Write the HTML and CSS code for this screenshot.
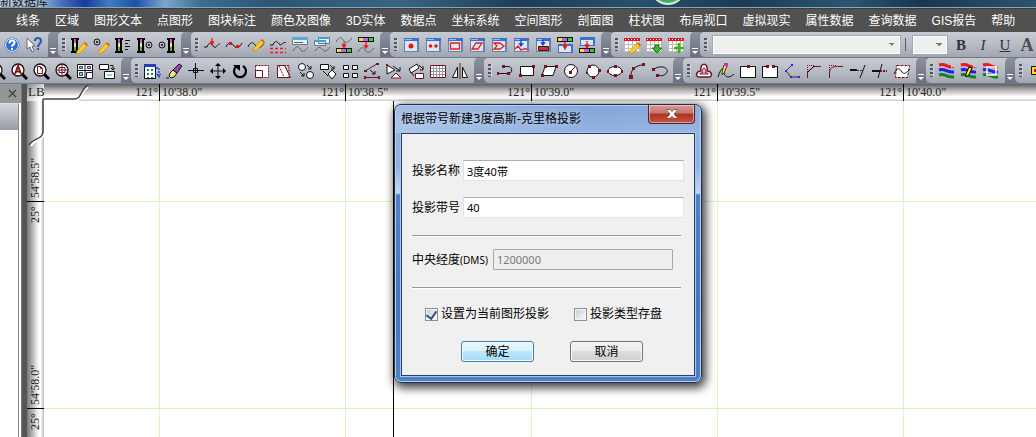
FILE: index.html
```html
<!DOCTYPE html>
<html lang="zh-CN">
<head>
<meta charset="utf-8">
<title>新数据库</title>
<link rel="stylesheet" href="styles.css">
</head>
<body>
<div class="app">
  <header class="titlebar"><span class="titlebar-text">新数据库</span><span class="orb"></span></header>

  <nav class="menu">
    <button>线条</button><button>区域</button><button>图形文本</button><button>点图形</button><button>图块标注</button><button>颜色及图像</button><button>3D实体</button><button>数据点</button><button>坐标系统</button><button>空间图形</button><button>剖面图</button><button>柱状图</button><button>布局视口</button><button>虚拟现实</button><button>属性数据</button><button>查询数据</button><button>GIS报告</button><button>帮助</button>
  </nav>

  <svg class="defs" aria-hidden="true">
    <symbol id="bar" viewBox="0 0 18 18"><path fill="#000" d="M1 2h8v2H8v11h1v2H1v-2h1V4H1z"/><path fill="#e040e0" d="M4 3h2v4H4z"/><path fill="#f4f060" d="M4 7h2v4H4z"/><path fill="#40b030" d="M4 11h2v4H4z"/></symbol>
    <symbol id="pencil" viewBox="0 0 18 18"><path fill="#ffc928" stroke="#c08000" stroke-width=".6" d="M7 15l7-8 3 3-7 7-4 1z"/><path fill="#e05030" d="M14 7l1-1 3 3-1 1z"/></symbol>
    <symbol id="win" viewBox="0 0 18 18"><path fill="#5f82b8" d="M2 2h15v14H2z"/><path fill="#3c70d0" d="M2 2h15v3H2z"/><path fill="#dce8f0" d="M3 5h12v10H3z"/><path fill="#8fc0f8" d="M3 3h7v1H3z"/></symbol>
    <symbol id="lens" viewBox="0 0 18 18"><path stroke="#000" stroke-width="3" d="M12 12l5 5"/><circle cx="8" cy="8" r="6" fill="#fff" stroke="#111" stroke-width="1.300"/></symbol>
    <symbol id="table" viewBox="0 0 18 18"><path fill="#fff" stroke="#bbb" d="M1.500 3.500h15v12h-15zM5.500 5v10M9.500 5v10M13.500 5v10M2 8.500h14M2 12.500h14"/><path fill="#e01818" d="M1 2h16v3H1z"/><path stroke="#fff" stroke-dasharray="1 2" d="M2 3.500h14"/></symbol>
    <symbol id="strip" viewBox="0 0 18 5"><path fill="#111" d="M1 0h16v5H1z"/><path fill="#f8e020" d="M2 1h4v3H2z"/><path fill="#c060f0" d="M6 1h5v3H6z"/><path fill="#30d040" d="M12 1h4v3h-4z"/></symbol>
    <symbol id="waves" viewBox="0 0 18 18"><g fill="none" stroke-width="3"><path stroke="#f01818" d="M1 3c6-2 8 2 12 2"/><path stroke="#2020f0" d="M1 8c6-2 8 3 15 2"/><path stroke="#108020" d="M1 13c6-2 8 3 15 2"/></g><path fill="none" stroke="#f01818" stroke-dasharray="2 1" d="M11 4c2 1 4 2 6 2"/></symbol>
  </svg>

  <div class="toolrow">
    <div class="group first">
      <button class="tool" aria-label="帮助主题"><svg viewBox="0 0 18 18"><circle cx="9" cy="9" r="6.500" fill="#2d6fd0" stroke="#fff"/><circle cx="9" cy="9" r="7.300" fill="none" stroke="#4a80c8" stroke-width=".8"/><path class="w2" d="M6.500 7.500c0-4 5-3.500 5-.8 0 2-2.500 1.800-2.500 4M9 12v2"/></svg></button>
      <button class="tool" aria-label="这是什么"><svg viewBox="0 0 18 18"><path fill="#fff" stroke="#667" d="M2 2l8 8H7l2 5-2 1-2-5-3 2z"/><path fill="none" stroke="#2860b0" stroke-width="2.200" d="M10 5c0-4 6-4 6 0 0 3-3 2.500-3 6M13 12v2"/></svg></button>
      <span class="more"></span>
    </div>
    <div class="group">
      <button class="tool" aria-label="编辑图例"><svg viewBox="0 0 18 18"><use href="#bar"/><use href="#pencil"/></svg></button>
      <button class="tool" aria-label="编辑点"><svg viewBox="0 0 18 18"><circle class="k" cx="5" cy="6" r="3"/><circle cx="5" cy="6" r="1"/><use href="#pencil"/></svg></button>
      <button class="tool" aria-label="图例列表"><svg viewBox="0 0 18 18"><use href="#bar"/><path class="k" d="M11 4.500h5M11 7.500h3M11 10.500h5M11 13.500h3"/></svg></button>
      <button class="tool" aria-label="图例到点"><svg viewBox="0 0 18 18"><use href="#bar"/><circle class="k" cx="13" cy="9" r="3"/><circle cx="13" cy="9" r="1"/></svg></button>
      <button class="tool" aria-label="点到图例"><svg viewBox="0 0 18 18"><use href="#bar" x="8"/><circle class="k" cx="4" cy="9" r="3"/><circle cx="4" cy="9" r="1"/></svg></button>
      <span class="more"></span>
    </div>
    <div class="group">
      <button class="tool" aria-label="线上加点"><svg viewBox="0 0 18 18"><path class="k" d="M1 11h3c2-6 5-3 7 0 2 2 4-4 6-3"/><path class="red" d="M9 2v5M7.500 6h3L9 9z"/></svg></button>
      <button class="tool" aria-label="线移点"><svg viewBox="0 0 18 18"><path class="k" d="M1 11c3-7 6-4 8-1s5 2 8-3"/><path class="rf" d="M4 6h3v3H4zM11 9h3v3h-3z"/></svg></button>
      <button class="tool" aria-label="编辑线"><svg viewBox="0 0 18 18"><path class="k" d="M1 11c3-7 6-4 8-1s5 2 8-3"/><use href="#pencil" y="-3"/></svg></button>
      <button class="tool" aria-label="线型"><svg viewBox="0 0 18 18"><path class="k" d="M1 9h3c2-6 5-3 7 0 2 0 4-4 6-2"/><path class="red" stroke-dasharray="3 2" d="M1 12.500h16M1 16.500h16"/></svg></button>
      <button class="tool" aria-label="线属性"><svg viewBox="0 0 18 18"><path fill="#e8f2f6" stroke="#678" d="M1.500 1.500h15v7h-15z"/><path fill="#58a8d8" d="M1 1h16v3H1z"/><path class="g" d="M3 6.500h9M2 15c4-7 6-4 8-1s4 1 7-3"/></svg></button>
      <button class="tool" aria-label="线窗口"><svg viewBox="0 0 18 18"><path fill="#e8f2f6" stroke="#678" d="M5.500 1.500h11v6h-11zM1.500 4.500h11v5h-11z"/><path fill="#40a0d0" d="M5 1h12v2H5zM1 4h12v2H1z"/><path class="g" d="M2 15c4-6 6-3 8-1s4 1 7-3"/></svg></button>
      <button class="tool" aria-label="线到色带"><svg viewBox="0 0 18 18"><path class="g" d="M1 6c4-7 6-4 8-1s4 1 8-3"/><use href="#strip" y="12" width="18" height="5"/><path class="red" d="M9 6v5M7.500 9h3L9 11.500z"/></svg></button>
      <button class="tool" aria-label="色带到线"><svg viewBox="0 0 18 18"><use href="#strip" y="1" width="18" height="5"/><path class="red" d="M9 6v5M7.500 10h3L9 12z"/><path class="g" d="M1 16c4-7 6-4 8-1s4 1 8-3"/></svg></button>
      <span class="more"></span>
    </div>
    <div class="group">
      <button class="tool" aria-label="单点"><svg viewBox="0 0 18 18"><use href="#win"/><circle class="rf" cx="9" cy="10" r="2.500"/></svg></button>
      <button class="tool" aria-label="双点"><svg viewBox="0 0 18 18"><use href="#win"/><circle class="rf" cx="6.500" cy="10" r="1.800"/><circle class="rf" cx="12" cy="10" r="1.800"/></svg></button>
      <button class="tool" aria-label="矩形窗口"><svg viewBox="0 0 18 18"><use href="#win"/><path class="red" d="M4.500 7h9v6h-9z"/></svg></button>
      <button class="tool" aria-label="斜形窗口"><svg viewBox="0 0 18 18"><use href="#win"/><path class="red" d="M8 7h6l-4 6H4z"/></svg></button>
      <button class="tool" aria-label="多边形窗口"><svg viewBox="0 0 18 18"><use href="#win"/><path class="red" d="M4 7h6l4 3-4 3H4l3-3z"/></svg></button>
      <button class="tool" aria-label="导入折线"><svg viewBox="0 0 18 18"><use href="#win"/><path class="blue" d="M9 3v6M7.500 8h3L9 10z"/><path class="red" d="M3 13l3-3 3 4 3-1h3"/></svg></button>
      <button class="tool" aria-label="导入区"><svg viewBox="0 0 18 18"><use href="#win"/><path fill="#f02020" stroke="#222" d="M4.500 10.500h10v4h-10z"/><path class="blue" d="M9 3v5M7.500 7h3L9 9z"/></svg></button>
      <button class="tool" aria-label="色带到窗口"><svg viewBox="0 0 18 18"><path fill="#3c70d0" d="M2 8h15v9H2z"/><path fill="#dce8f0" d="M3 10h12v6H3z"/><use href="#strip" y="1" width="18" height="5"/><path class="red" d="M9 6v6M7.500 10h3L9 13z"/></svg></button>
      <button class="tool" aria-label="窗口到色带"><svg viewBox="0 0 18 18"><path fill="#3c70d0" d="M2 1h15v9H2z"/><path fill="#dce8f0" d="M3 4h12v5H3z"/><use href="#strip" y="12" width="18" height="5"/><path class="red" d="M9 5v6M7.500 9h3L9 12z"/></svg></button>
      <span class="more"></span>
    </div>
    <div class="group">
      <button class="tool" aria-label="编辑表"><svg viewBox="0 0 18 18"><use href="#table"/><use href="#pencil"/></svg></button>
      <button class="tool" aria-label="导出表"><svg viewBox="0 0 18 18"><use href="#table"/><path fill="#40b828" stroke="#187810" d="M10 9h4v3h3l-5 5-5-5h3z"/></svg></button>
      <button class="tool" aria-label="新增表"><svg viewBox="0 0 18 18"><use href="#table"/><path stroke="#30b818" stroke-width="2.500" d="M12 7v10M7 12h10"/></svg></button>
      <span class="more"></span>
    </div>
    <div class="group grow">
      <select class="combo font-name" aria-label="字体"><option></option></select>
      <span class="sep"></span>
      <select class="combo font-size" aria-label="字号"><option></option></select>
      <button class="fmt"><b>B</b></button><button class="fmt"><i>I</i></button><button class="fmt"><u>U</u></button><button class="fmt big">A</button>
    </div>
  </div>

  <div class="toolrow">
    <div class="group first-low">
      <button class="tool" aria-label="缩放"><svg viewBox="0 0 18 18"><use href="#lens"/></svg></button>
      <button class="tool" aria-label="全部"><svg viewBox="0 0 18 18"><use href="#lens"/><path class="d2" d="M5 12l3-8 3 8M6 9.500h4"/></svg></button>
      <button class="tool" aria-label="页面"><svg viewBox="0 0 18 18"><use href="#lens"/><path class="d" d="M5.500 4.500h3l2 2v5h-5zM8.500 4.500v2h2"/></svg></button>
      <button class="tool" aria-label="放大"><svg viewBox="0 0 18 18"><use href="#lens"/><path class="d" d="M8 2v12M2 8h12M5 5.500h6v5H5z"/></svg></button>
      <button class="tool" aria-label="排列视图"><svg viewBox="0 0 18 18"><path fill="#fff" stroke="#111" d="M1.500 2.500h15v13h-15zM9 2v13M2 8.500h14"/><path fill="#80e0d8" stroke="#345" d="M3.500 4.500h3v2h-3zM11.500 4.500h3v2h-3zM3.500 10.500h3v3h-3z"/><path fill="#fff" stroke="#223" d="M10.500 10.500h6v6h-6z"/></svg></button>
      <button class="tool" aria-label="层叠视图"><svg viewBox="0 0 18 18"><path class="kw" d="M1.500 2.500h9v5h-9zM6.500 9.500h10v7h-10z"/><path fill="#80e0d8" d="M9 12h5v2H9z"/><path class="k" d="M12 3.500h3v4M13 6l2 2 2-2"/></svg></button>
      <span class="more"></span>
    </div>
    <div class="group">
      <button class="tool" aria-label="选择"><svg viewBox="0 0 18 18"><path fill="#fff" stroke="#111" d="M1.500 2.500h11v14h-11z"/><path fill="#2040c0" d="M1 2h12v3H1z"/><path stroke="#108070" stroke-width="2" stroke-dasharray="2 2" d="M5 7v9M9 7v9"/><path class="blue" stroke-dasharray="2 1" d="M13 6h3v8M14 12l2 3 2-3"/></svg></button>
      <button class="tool" aria-label="擦除"><svg viewBox="0 0 18 18"><path fill="#f4e880" stroke="#111" d="M5 11l3-3 4 3-3 4-3 1-2-2z"/><path fill="#a040b0" stroke="#111" d="M8 8l6-6 3 2-5 7z"/><path class="k" d="M1 16h3"/></svg></button>
      <button class="tool" aria-label="十字"><svg viewBox="0 0 18 18"><path class="k" d="M8.500 1v16M1 8.500h16M6.500 6.500h4v4h-4z"/></svg></button>
      <button class="tool" aria-label="移动"><svg viewBox="0 0 18 18"><path class="k" d="M9 2v14M2 9h14"/><path d="M9 1l3 3H6zM9 17l3-3H6zM1 9l3-3v6zM17 9l-3-3v6z"/></svg></button>
      <button class="tool" aria-label="旋转"><svg viewBox="0 0 18 18"><path fill="none" stroke="#000" stroke-width="2.200" d="M12 4a6 6 0 1 1-6 0"/><path d="M2 3h7v6z"/></svg></button>
      <button class="tool" aria-label="缩放对象"><svg viewBox="0 0 18 18"><path class="dw" stroke-dasharray="2 1" d="M2.500 3.500h13v12h-13z"/><path class="dw" d="M2.500 8.500h7v7h-7z"/></svg></button>
      <button class="tool" aria-label="斜切"><svg viewBox="0 0 18 18"><path class="dw" d="M2.500 3.500h7l6 12h-13z"/><path class="d" stroke-dasharray="2 1" d="M9 3.500h5v12M4 4l5 11"/></svg></button>
      <button class="tool" aria-label="复制圆"><svg viewBox="0 0 18 18"><circle class="kw" cx="5" cy="5" r="3.500"/><circle class="kw" cx="13" cy="13" r="3.500"/><path class="k" d="M10 3l4 4M14 4v3h-3M3 10l4 4M7 11v3H4"/></svg></button>
      <button class="tool" aria-label="复制矩形"><svg viewBox="0 0 18 18"><path class="kw" d="M1.500 2.500h8v5h-8zM9 12l4-4 4 4-4 5z"/><path class="k" d="M11 3l4 4M15 4v3h-3M4 9l5 5"/></svg></button>
      <button class="tool" aria-label="阵列"><svg viewBox="0 0 18 18"><path class="kw" d="M2.500 3.500h5v4h-5zM11.500 3.500h5v4h-5zM2.500 11.500h5v4h-5zM11.500 11.500h5v4h-5z"/></svg></button>
      <button class="tool" aria-label="对齐线"><svg viewBox="0 0 18 18"><path class="d" d="M2 9l12-7M2 15.500h14"/><path class="df" d="M1 8h3v2H1zM13 1h3v2h-3zM1 14h2v3H1zM15 14h2v3h-2z"/><path class="k" d="M7 8l5 4M12 9v3H9"/></svg></button>
      <button class="tool" aria-label="对齐三角"><svg viewBox="0 0 18 18"><path class="kw" d="M2 3l8 5-8 4z"/><path class="dw" d="M6 16l5-5 5 5z"/><path class="k" d="M8 4l7 5M15 5v4h-4"/><path class="df" d="M1 2h2v2H1z"/></svg></button>
      <button class="tool" aria-label="对齐矩形"><svg viewBox="0 0 18 18"><path class="kw" d="M2 7l8-5 2 4-8 5z"/><path class="dw" d="M8.500 11.500h8v5h-8z"/><path class="k" d="M12 3l4 4M16 4v4h-3M4 10l3 4"/></svg></button>
      <button class="tool" aria-label="网格"><svg viewBox="0 0 18 18"><path fill="#fff" stroke="#999" d="M1.500 3.500h15v12h-15zM4.500 4v11M7.500 4v11M10.500 4v11M13.500 4v11M2 6.500h14M2 9.500h14M2 12.500h14"/><path class="d" d="M1.500 3.500h15v12h-15z"/></svg></button>
      <button class="tool" aria-label="镜像"><svg viewBox="0 0 18 18"><path class="kw" d="M6.500 5v10.500h-5zM11.500 5v10.500h5z"/><path class="d" d="M9 1v16"/></svg></button>
      <span class="more"></span>
    </div>
    <div class="group">
      <button class="tool" aria-label="多段线"><svg viewBox="0 0 18 18"><path class="k" d="M8 4.500h4c5 0 5 7 0 7H2"/><path class="df" d="M6 3h3v3H6zM11 10h3v3h-3zM1 10h2v3H1z"/></svg></button>
      <button class="tool" aria-label="矩形"><svg viewBox="0 0 18 18"><path class="kw" d="M2.500 4.500h13v9h-13z"/><path class="df" d="M14 3h3v3h-3zM1 12h3v3H1z"/></svg></button>
      <button class="tool" aria-label="平行四边形"><svg viewBox="0 0 18 18"><path class="kw" d="M5 4.500h11l-3 9H2z"/><path class="df" d="M4 3h3v3H4zM15 3h3v3h-3zM1 12h3v3H1z"/></svg></button>
      <button class="tool" aria-label="圆半径"><svg viewBox="0 0 18 18"><circle class="kw" cx="9" cy="9" r="6.500"/><path class="d" d="M8 10l5-5"/><path class="df" d="M7 9h3v3H7z"/></svg></button>
      <button class="tool" aria-label="三点圆"><svg viewBox="0 0 18 18"><circle class="kw" cx="9" cy="9" r="6"/><path class="df" d="M4 3h3v3H4zM14 7h3v3h-3zM8 14h3v3H8zM2 10h2v2H2z"/></svg></button>
      <button class="tool" aria-label="椭圆"><svg viewBox="0 0 18 18"><ellipse class="kw" cx="9" cy="9" rx="7" ry="4.500"/><path class="df" d="M8 3h3v3H8zM1 8h2v3H1zM15 8h2v3h-2zM8 12h3v3H8z"/></svg></button>
      <button class="tool" aria-label="圆弧"><svg viewBox="0 0 18 18"><path class="k" d="M3 15c-1-7 5-12 12-12"/><path class="df" d="M1 13h4v4H1zM4 5h3v3H4zM14 1h3v3h-3z"/></svg></button>
      <button class="tool" aria-label="椭圆弧"><svg viewBox="0 0 18 18"><path class="k" d="M4 7c10-6 18 2 10 6-2 1-4 1-6 0"/><path class="df" d="M2 6h3v3H2zM6 12h3v3H6z"/></svg></button>
      <span class="more"></span>
    </div>
    <div class="group">
      <button class="tool" aria-label="缓冲区"><svg viewBox="0 0 18 18"><path class="dw" stroke-width="1.500" d="M6 9c-2-9 8-9 6 0 5 0 6 6 2 6H4c-4 0-3-6 2-6z"/><path class="d" d="M8 11c0-1-1-5 1-5s1 4 1 5h3v1H5v-1z"/></svg></button>
      <button class="tool" aria-label="手绘"><svg viewBox="0 0 18 18"><path class="k" d="M1 15c4-12 5-8 6-4s5 6 10 1"/><path fill="#f8f020" stroke="#333" d="M5 10l2-7 3 1-3 7-2 2z"/><path fill="#e020e0" d="M7 1h4v3H7z"/></svg></button>
      <button class="tool" aria-label="打断"><svg viewBox="0 0 18 18"><path class="kw" d="M1.500 4.500h15v11h-15z"/><path class="df" d="M8 3h3v3H8z"/></svg></button>
      <button class="tool" aria-label="两点打断"><svg viewBox="0 0 18 18"><path class="kw" d="M6 4.500H1.500v11h15v-11H12"/><path class="df" d="M5 3h3v3H5zM11 3h3v3h-3z"/></svg></button>
      <button class="tool" aria-label="连接点"><svg viewBox="0 0 18 18"><path class="d" d="M9 3L3 9l5 6h7"/><path class="bf" d="M8 2h2v2H8zM2 8h2v2H2zM7 14h2v2H7zM15 14h2v2h-2z"/></svg></button>
      <button class="tool" aria-label="倒角"><svg viewBox="0 0 18 18"><path class="d" d="M2.500 16v-6L9 4.500h7"/><path class="d" stroke-dasharray="1 1" d="M2.500 10V3.500H9"/><path class="k" d="M3 10l6-6"/></svg></button>
      <button class="tool" aria-label="圆角"><svg viewBox="0 0 18 18"><path class="d" d="M2.500 16v-5c0-5 3-6.500 8-6.500H16"/><path class="d" stroke-dasharray="1 1" d="M2.500 10V3.500H9"/></svg></button>
      <button class="tool" aria-label="延伸"><svg viewBox="0 0 18 18"><path class="k" stroke-width="2" d="M1 8h7"/><path class="d" stroke-dasharray="2 1" d="M8 8.500h5"/><path class="k" d="M16 3l-5 13"/></svg></button>
      <button class="tool" aria-label="修剪"><svg viewBox="0 0 18 18"><path class="k" stroke-width="2" d="M1 9h8"/><path class="k" d="M11 2L7 16"/><path class="d2" stroke-dasharray="2 1" d="M9 9h7"/></svg></button>
      <button class="tool" aria-label="裁剪区"><svg viewBox="0 0 18 18"><path class="dw" stroke-dasharray="3 1" d="M3.500 3.500h13l-2 12h-12z"/><path class="k" d="M1 12c4-8 6-5 8-2s4 1 8-3"/></svg></button>
      <span class="more"></span>
    </div>
    <div class="group">
      <button class="tool" aria-label="图层"><svg viewBox="0 0 18 18"><use href="#waves"/></svg></button>
      <button class="tool" aria-label="编辑图层"><svg viewBox="0 0 18 18"><use href="#waves"/><path fill="#f8f020" stroke="#000" d="M6 12l3-7 3 1-3 7-3 2z"/></svg></button>
      <button class="tool" aria-label="图层窗口"><svg viewBox="0 0 18 18"><use href="#waves"/><path fill="none" stroke="#fff" stroke-width="1.500" d="M5 5h9v8H5z"/></svg></button>
      <span class="more"></span>
    </div>
    <div class="group grow">
      <button class="tool" aria-label="图框"><svg viewBox="0 0 18 18"><path fill="#f8e020" stroke="#111" d="M4.500 4.500h13v8h-13z"/><path class="rf" d="M7 7h3v3H7z"/></svg></button>
    </div>
  </div>

  <main class="work">
    <aside class="panel">
      <div class="panel-head"><button class="panel-close" aria-label="关闭面板"><svg viewBox="0 0 10 10"><path d="M1 1l8 8M9 1l-8 8"/></svg></button></div>
      <div class="panel-bar"></div>
      <div class="panel-body"></div>
    </aside>
    <div class="view">
      <div class="corner">LB<svg viewBox="0 0 64 64"><path class="glow" d="M17 17h30c8 0 6-9 14-14M18 17v30c0 9-9 6-14 15"/><path class="edge" d="M16 15h31c8 0 6-9 14-14M16 15v32c0 9-9 6-14 14"/></svg></div>
      <div class="ruler-x">
        <div class="mark"><span>121°</span><span>10'38.0"</span></div>
        <div class="mark"><span>121°</span><span>10'38.5"</span></div>
        <div class="mark"><span>121°</span><span>10'39.0"</span></div>
        <div class="mark"><span>121°</span><span>10'39.5"</span></div>
        <div class="mark"><span>121°</span><span>10'40.0"</span></div>
      </div>
      <div class="ruler-y">
        <div class="mark"><span>25°</span><span>54'58.5"</span></div>
        <div class="mark"><span>25°</span><span>54'58.0"</span></div>
      </div>
      <div class="canvas"><div class="axis"></div></div>
    </div>
  </main>

  <form class="dialog" role="dialog" aria-labelledby="dlg-title">
    <div class="dialog-head">
      <h1 id="dlg-title">根据带号新建3度高斯-克里格投影</h1>
      <button type="button" class="close" aria-label="关闭"><svg viewBox="0 0 12 10"><path d="M1 .5h3l2 2 2-2h3v1L8 5l3 3.500v1H8l-2-2-2 2H1v-1L4 5 1 1.500z"/></svg></button>
    </div>
    <div class="dialog-body">
      <div class="field"><label for="name">投影名称</label><input id="name" type="text" value="3度40带"></div>
      <div class="field"><label for="zone">投影带号</label><input id="zone" type="text" value="40"></div>
      <div class="field central"><label for="meridian">中央经度<small>(DMS)</small></label><input id="meridian" type="text" value="1200000" disabled></div>
      <div class="checks">
        <label><input type="checkbox" checked>设置为当前图形投影</label>
        <label><input type="checkbox">投影类型存盘</label>
      </div>
      <div class="actions"><button type="submit" class="btn primary">确定</button><button type="button" class="btn">取消</button></div>
    </div>
  </form>
</div>
</body>
</html>
```

FILE: styles.css
```css
* { box-sizing: border-box; }
body { margin: 0; font: 12px/16px "Liberation Sans", "Noto Sans CJK SC", sans-serif; color: #000; }
button, input, select { font: inherit; color: inherit; margin: 0; }
button { padding: 0; border: 0; background: none; }
.app { position: relative; height: 100vh; display: flex; flex-direction: column; overflow: hidden; background: #666c79; }
.defs { position: absolute; width: 0; height: 0; }

.titlebar { position: relative; flex: none; height: 8px; overflow: hidden; display: flex; align-items: flex-end; border-bottom: 1px solid #8ba3b5;
  background: linear-gradient(90deg, #b4c8da 0, #9db6d0 40px, #4a77bb 60px, #1838a0 85px, #3f7fc0 110px, #1c50a8 135px, #7ba8cc 165px, #3b6f92 200px, #2c5575 270px, #386482 400px, #1d3d58 520px, #27506c 640px, #1b3b56 740px, #2a5572 850px, #18364f 920px, #2c5470 100%); }
.titlebar-text { margin-bottom: -3px; color: #111; }
.orb { position: absolute; left: 650px; bottom: 2px; width: 36px; height: 36px; border-radius: 50%; border: 2px solid #d8eade; background: #3fae62; }

.menu { flex: none; height: 24px; display: flex; gap: 15px; padding-left: 16px; background: #515151; border-top: 1px solid #3d3d3d; color: #fff; }
.menu button { flex: none; white-space: nowrap; color: #fff; }

.toolrow { flex: none; display: flex; height: 26px; background: #737987; }
.group { position: relative; flex: none; display: flex; align-items: center; padding-left: 10px; height: 25px; border-radius: 4px 0 5px 5px; background: linear-gradient(#c6cad1, #b8bcc5 50%, #a0a6b1); }
.group::before { content: ""; position: absolute; left: 4px; top: 6px; width: 3px; height: 13px; background: repeating-linear-gradient(#50545e 0 2px, transparent 2px 4px); border-right: 1px solid #d0d4da; }
.first { margin-left: -9px; }
.first-low { margin-left: -24px; }
.grow { flex: 1 1 auto; min-width: 0; border-radius: 4px 0 0 5px; }
.tool { flex: none; width: 22px; height: 22px; display: grid; place-items: center; }
.tool svg { width: 18px; height: 18px; }
.more { position: relative; align-self: stretch; width: 13px; border-left: 3px solid transparent; background: linear-gradient(#8b919d, #6a707e) padding-box; border-radius: 6px 0 0 0; }
.more::after { content: ""; position: absolute; left: 2px; bottom: 3px; border: 3px solid transparent; border-top-color: #fff; border-bottom: 0; }
.more::before { content: ""; position: absolute; left: 2px; bottom: 8px; width: 6px; height: 1px; background: #fff; }
.k { fill: none; stroke: #111; }
.kw { fill: #fff; stroke: #111; }
.d { fill: none; stroke: #7a1020; }
.d2 { fill: none; stroke: #8a1018; stroke-width: 2; }
.dw { fill: #fff; stroke: #7a1020; }
.df { fill: #7a1020; }
.g { fill: none; stroke: #5a6066; }
.w2 { fill: none; stroke: #fff; stroke-width: 2; }
.red { fill: none; stroke: #f01818; stroke-width: 1.3; }
.rf { fill: #f01010; }
.blue { fill: none; stroke: #1838e0; stroke-width: 1.3; }
.bf { fill: #1828f0; }

.combo { flex: none; appearance: none; height: 18px; border: 1px solid #fff; border-radius: 0; outline: 1px solid #a4a8b0; padding: 0;
  background: linear-gradient(45deg, transparent 50%, #777 50%) right 7px center / 3px 3px no-repeat, linear-gradient(-45deg, transparent 50%, #777 50%) right 4px center / 3px 3px no-repeat, #eeefef; }
.font-name { width: 187px; margin-left: 3px; }
.font-size { width: 34px; }
.sep { flex: none; width: 1px; height: 13px; margin: 0 7px 0 5px; background: #555b66; }
.fmt { flex: none; width: 22px; font: 15px/18px "Liberation Serif", serif; color: #30343a; }
.fmt:first-of-type { margin-left: 3px; }
.big { font-size: 18px; font-weight: bold; color: #4a4f58; }

.work { flex: 1; min-height: 0; display: flex; background: #555; }
.panel { flex: none; width: 22px; display: flex; flex-direction: column; background: #fff; border-right: 1px solid #777; }
.panel-head { height: 19px; padding-left: 8px; background: #959796; display: flex; align-items: center; }
.panel-close { width: 9px; height: 9px; display: flex; }
.panel-close svg { width: 9px; height: 9px; stroke: #333; stroke-width: 1.3; fill: none; }
.panel-bar { height: 27px; margin-right: 2px; border-top: 1px solid #ddd; border-right: 1px solid #888; background: linear-gradient(#d3d6da, #969ca8); }
.panel-body { flex: 1; margin-right: 2px; border-right: 1px solid #888; }

.view { flex: 1; min-width: 0; margin-left: 5px; position: relative; display: grid; grid-template: 17px 1fr / 17px 1fr; font: 12px/14px "Liberation Serif", serif; background: #fff; color: #222; }
.corner { position: relative; padding-left: 1px; font-size: 13px; line-height: 16px; background: linear-gradient(135deg, #888, #fff 80%); }
.corner svg { position: absolute; left: 0; top: 0; width: 64px; height: 64px; fill: none; z-index: 1; }
.glow { stroke: #fff; stroke-width: 2; }
.edge { stroke: #484848; stroke-width: 1.5; }
.ruler-x { display: flex; overflow: hidden; padding-left: 22px; background: linear-gradient(#5e5e5e, #b0b0b0 35%, #fff 75%, #fff 85%, #c8c8c8); }
.ruler-x .mark { flex: none; width: 186px; display: grid; grid-template-columns: 1fr 1fr; line-height: 16px; }
.ruler-x span:first-child { text-align: right; padding-right: 1px; }
.ruler-x span:last-child { border-left: 1px solid #000; padding-left: 2px; }
.ruler-x span, .ruler-y span { white-space: nowrap; }
.ruler-y { display: flex; flex-direction: column; min-height: 0; overflow: hidden; background: linear-gradient(90deg, #777, #bbb 35%, #fff 70%, #fff 80%, #bbb); }
.ruler-y .mark { flex: none; height: 207px; writing-mode: vertical-rl; transform: rotate(180deg); display: grid; grid-template-rows: 1fr 1fr; grid-template-columns: 17px; line-height: 16px; }
.ruler-y .mark:first-child { margin-top: -3px; }
.canvas { background: linear-gradient(#d0f6bd, #d0f6bd) 0 100px / 100% 1px no-repeat, linear-gradient(#d0f6bd, #d0f6bd) 0 307px / 100% 1px no-repeat, repeating-linear-gradient(90deg, transparent 0 185px, #d8f8c6 185px 186px) -70px 0 / calc(100% + 70px) 100% no-repeat; }
.ruler-y span:first-child { text-align: right; padding-bottom: 4px; border-bottom: 1px solid #000; }
.ruler-y span:last-child { padding-top: 3px; }
.ruler-y .mark { grid-template: none; grid-template-rows: 17px; grid-template-columns: 1fr 1fr; }
.axis { margin-left: 349px; width: 1px; height: 100%; background: #000; }

.dialog { position: absolute; left: 394px; top: 104px; width: 308px; padding: 0 6px 6px; border: 1px solid #1d2f4c; border-radius: 7px; box-shadow: inset 0 0 0 1px #b9d2f2, 2px 3px 10px 2px rgba(0,0,0,.75);
  background: linear-gradient(90deg, rgba(255,255,255,.25), transparent 60%, rgba(255,255,255,.05)) top / 100% 28px no-repeat, linear-gradient(#84a5d8, #94b3e1 28px, #8fb1e2 60px, #c3d8f4 88px, #4f82c8 90px, #4677bd 200px, #4e80c4); }
.dialog-head { height: 28px; display: flex; justify-content: space-between; align-items: flex-start; }
h1 { margin: 6px 0 0; font: 12px/16px "DejaVu Sans", "Noto Sans CJK SC", sans-serif; text-shadow: 0 0 6px #d8e6fa; white-space: nowrap; }
.close { width: 47px; height: 19px; border: 1px solid #4c2230; border-top: 0; border-radius: 0 0 4px 4px; box-shadow: inset 0 0 0 1px rgba(255,255,255,.45); background: linear-gradient(#d99a94, #c9756c 45%, #ae3222 50%, #c65445); display: grid; place-items: center; }
.close svg { width: 12px; height: 10px; fill: #fff; stroke: #5b4a52; stroke-width: .8; }
.dialog-body { border: 1px solid #253f68; outline: 1px solid #a9c6ef; background: #f0f0f0; padding: 26px 10px 13px; color: #000; }
.field { display: flex; align-items: center; gap: 3px; margin-bottom: 16px; }
.field label { white-space: nowrap; }
.field small { font: 10px/16px "Noto Sans", sans-serif; }
.field input { flex: 1; min-width: 0; height: 21px; border: 1px solid #e2e3ea; border-top-color: #abadb3; padding: 0 3px; background: #fff; font-family: "Noto Sans", "Noto Sans CJK SC", sans-serif; font-size: 11px; }
.field + .field { margin-bottom: 17px; }
.field.central { margin: 0 3px 18px 0; padding: 13px 8px 17px 0; gap: 5px; border-top: 1px solid #989898; border-bottom: 1px solid #989898; box-shadow: 0 1px #fff, inset 0 1px #fff; }
.field.central input { border: 1px solid #a8a8a8; border-radius: 1px; color: #777; background: #efefef; }
.checks { display: flex; gap: 25px; padding-left: 13px; }
.checks label { display: flex; align-items: center; gap: 3px; white-space: nowrap; }
.checks input { appearance: none; width: 13px; height: 13px; border: 1px solid #8e8f8f; background: linear-gradient(135deg, #c4c8d0, #fff); box-shadow: inset 0 0 0 1px #f4f4f4; display: grid; place-items: center; }
.checks input:checked::after { content: ""; width: 5px; height: 8px; margin-bottom: 2px; border: solid #35508f; border-width: 0 2px 2px 0; transform: rotate(35deg); }
.actions { display: flex; gap: 36px; padding-left: 49px; margin-top: 19px; }
.btn { width: 73px; height: 21px; border: 1px solid #707070; border-radius: 3px; box-shadow: inset 0 0 0 1px #fbfbfb; background: linear-gradient(#f2f2f2, #ebebeb 50%, #dddddd 50%, #cfcfcf); }
.primary { border-color: #3c7fb1; background: linear-gradient(#e8f5fc, #d9f0fc 50%, #bde6fd 50%, #a6d9f4); }
```
